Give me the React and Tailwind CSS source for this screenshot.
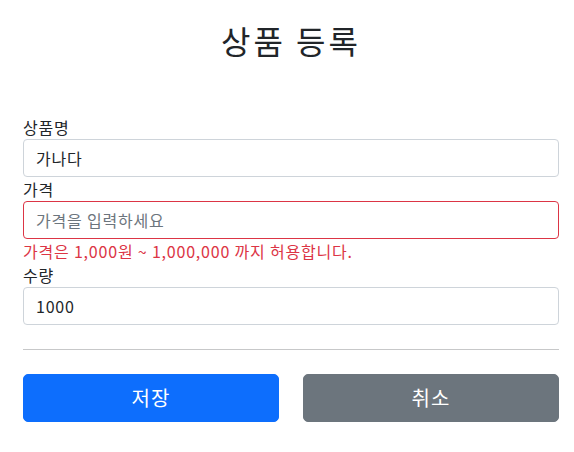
import { useState } from 'react';

const inputBase =
  'block w-full h-[38px] rounded-[4px] border bg-white px-3 py-1.5 text-base leading-6 tracking-[0.8px] text-[#212529] placeholder:text-[#6c757d] outline-none';

export default function App() {
  const [name, setName] = useState('가나다');
  const [price, setPrice] = useState('');
  const [qty, setQty] = useState('1000');

  return (
    <div className="ml-[11px] w-[560px] px-3 text-base leading-6 tracking-[0.8px] text-[#212529] font-['Noto_Sans_CJK_KR','Noto_Sans',sans-serif]">
      {/* Title */}
      <div className="pt-[21px] pb-12 text-center">
        <h2 className="mb-2 text-[32px] leading-[1.2] tracking-[3px] font-normal">상품 등록</h2>
      </div>

      <form onSubmit={(e) => e.preventDefault()}>
        <div>
          <label htmlFor="itemName" className="block">상품명</label>
          <input
            id="itemName"
            type="text"
            value={name}
            onChange={(e) => setName(e.target.value)}
            className={`${inputBase} border-[#ced4da]`}
          />
        </div>

        <div>
          <label htmlFor="price" className="block">가격</label>
          <input
            id="price"
            type="text"
            value={price}
            onChange={(e) => setPrice(e.target.value)}
            placeholder="가격을 입력하세요"
            className={`${inputBase} border-[#dc3545]`}
          />
          <div className="text-[#dc3545]">가격은 1,000원 ~ 1,000,000 까지 허용합니다.</div>
        </div>

        <div>
          <label htmlFor="quantity" className="block">수량</label>
          <input
            id="quantity"
            type="text"
            value={qty}
            onChange={(e) => setQty(e.target.value)}
            className={`${inputBase} border-[#ced4da]`}
          />
        </div>

        <hr className="my-6 border-t border-[#212529] opacity-25" />

        <div className="grid grid-cols-2 gap-6">
          <button
            type="submit"
            className="h-12 w-full rounded-[5px] border border-[#0d6efd] bg-[#0d6efd] px-4 py-2 text-xl leading-[30px] tracking-[1px] text-white"
          >
            저장
          </button>
          <button
            type="button"
            className="h-12 w-full rounded-[5px] border border-[#6c757d] bg-[#6c757d] px-4 py-2 text-xl leading-[30px] tracking-[1px] text-white"
          >
            취소
          </button>
        </div>
      </form>
    </div>
  );
}
